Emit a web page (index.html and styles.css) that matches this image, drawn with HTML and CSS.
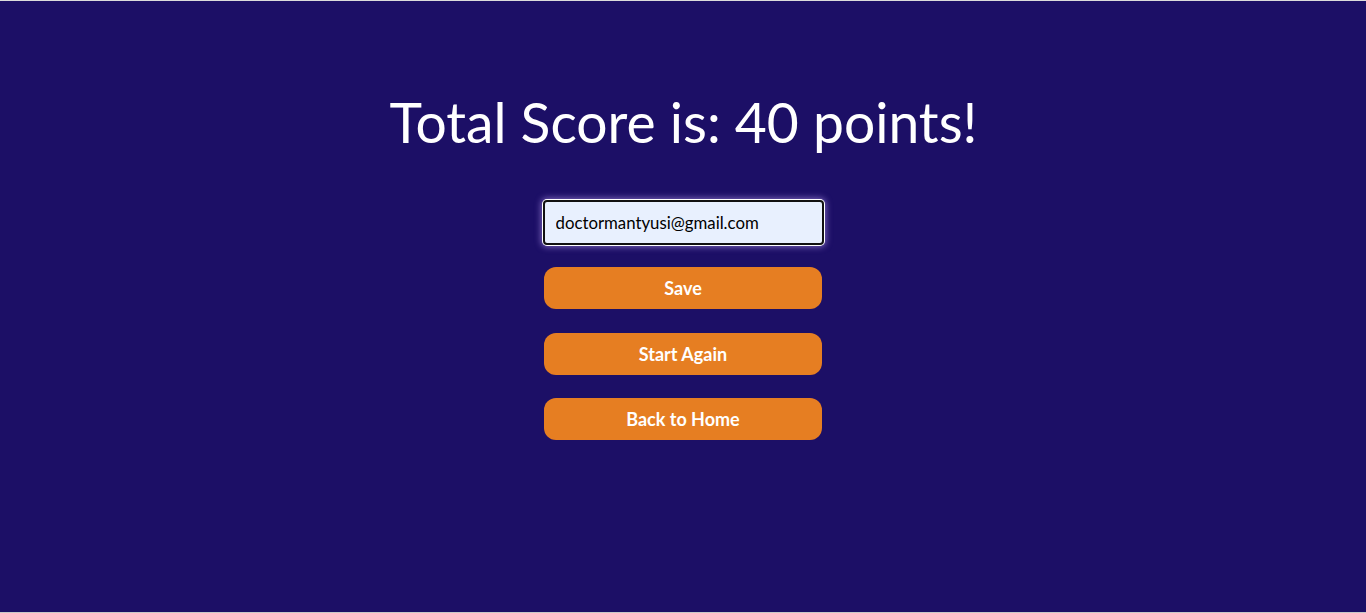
FILE: index.html
```html
<!DOCTYPE html>
<html lang="en">
<head>
<meta charset="utf-8">
<title>Score</title>
<link rel="stylesheet" href="styles.css">
</head>
<body>
<main class="page">
  <h1 class="title">Total Score is: 40 points!</h1>
  <form class="form">
    <input class="email" type="text" value="doctormantyusi@gmail.com">
    <button class="btn" type="button">Save</button>
    <button class="btn" type="button">Start Again</button>
    <button class="btn" type="button">Back to Home</button>
  </form>
</main>
</body>
</html>
```
FILE: styles.css
```css
html, body {
  margin: 0;
  padding: 0;
  background: #dcdcdc;
}
.page {
  box-sizing: border-box;
  height: 613px;
  margin: 0;
  border-top: 1px solid #dcdcdc;
  border-bottom: 1px solid #c8c8c8;
  background: #1c0f66;
  font-family: Lato, "Liberation Sans", sans-serif;
  display: flex;
  flex-direction: column;
  align-items: center;
  padding-top: 86px;
}
.title {
  margin: 0;
  color: #ffffff;
  font-weight: 400;
  font-size: 55.2px;
  line-height: 70px;
  padding-left: 1px;
}
.form {
  display: flex;
  flex-direction: column;
  align-items: center;
  margin-top: 43px;
}
.email {
  box-sizing: border-box;
  width: 281px;
  height: 45px;
  border: 2px solid #111111;
  border-radius: 4px;
  background: #e8f0fe;
  color: #000;
  font-family: Lato, "Liberation Sans", sans-serif;
  font-size: 16.8px;
  padding: 0 11px;
  box-shadow: 0 0 0 1px #ffffff, 0 0 6px 2px rgba(200, 170, 255, 0.55);
  outline: none;
  margin-bottom: 22px;
}
.btn {
  box-sizing: border-box;
  width: 278px;
  height: 42px;
  border: none;
  border-radius: 12px;
  background: #e67e22;
  color: #ffffff;
  font-family: Lato, "Liberation Sans", sans-serif;
  font-size: 18px;
  font-weight: 700;
  margin-bottom: 24px;
  padding: 0;
}
.btn + .btn + .btn {
  margin-top: -1px;
}
```
